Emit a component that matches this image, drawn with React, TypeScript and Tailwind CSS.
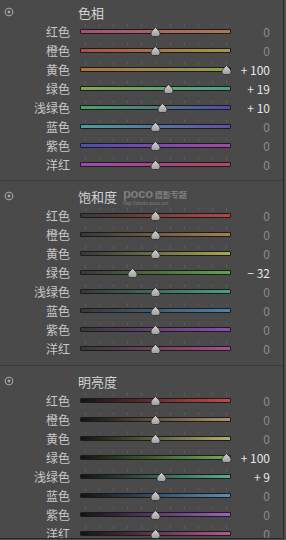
import React from 'react';

type Row = { label: string; value: number; track: string };
type Section = { title: string; rows: Row[] };

const sections: Section[] = [
  {
    title: '色相',
    rows: [
      { label: '红色', value: 0, track: 'bg-[linear-gradient(90deg,#ad4a78,#ad7a48)]' },
      { label: '橙色', value: 0, track: 'bg-[linear-gradient(90deg,#ad4e4a,#a09c48)]' },
      { label: '黄色', value: 100, track: 'bg-[linear-gradient(90deg,#b07238,#90a044)]' },
      { label: '绿色', value: 19, track: 'bg-[linear-gradient(90deg,#8aa648,#46a092)]' },
      { label: '浅绿色', value: 10, track: 'bg-[linear-gradient(90deg,#4ca45e,#4e4eaa)]' },
      { label: '蓝色', value: 0, track: 'bg-[linear-gradient(90deg,#48a09a,#644eaa)]' },
      { label: '紫色', value: 0, track: 'bg-[linear-gradient(90deg,#4e4eb0,#a648a6)]' },
      { label: '洋红', value: 0, track: 'bg-[linear-gradient(90deg,#9a48b2,#b2485e)]' },
    ],
  },
  {
    title: '饱和度',
    rows: [
      { label: '红色', value: 0, track: 'bg-[linear-gradient(90deg,#383838,#b84646)]' },
      { label: '橙色', value: 0, track: 'bg-[linear-gradient(90deg,#383838,#a88050)]' },
      { label: '黄色', value: 0, track: 'bg-[linear-gradient(90deg,#383838,#a8a84a)]' },
      { label: '绿色', value: -32, track: 'bg-[linear-gradient(90deg,#383838,#62a24a)]' },
      { label: '浅绿色', value: 0, track: 'bg-[linear-gradient(90deg,#383838,#44a286)]' },
      { label: '蓝色', value: 0, track: 'bg-[linear-gradient(90deg,#383838,#4a82b0)]' },
      { label: '紫色', value: 0, track: 'bg-[linear-gradient(90deg,#383838,#904ab0)]' },
      { label: '洋红', value: 0, track: 'bg-[linear-gradient(90deg,#383838,#b04a8c)]' },
    ],
  },
  {
    title: '明亮度',
    rows: [
      { label: '红色', value: 0, track: 'bg-[linear-gradient(90deg,#141414,#c04c4c)]' },
      { label: '橙色', value: 0, track: 'bg-[linear-gradient(90deg,#141414,#b09068)]' },
      { label: '黄色', value: 0, track: 'bg-[linear-gradient(90deg,#141414,#b0b068)]' },
      { label: '绿色', value: 100, track: 'bg-[linear-gradient(90deg,#141414,#72ac56)]' },
      { label: '浅绿色', value: 9, track: 'bg-[linear-gradient(90deg,#141414,#56ac94)]' },
      { label: '蓝色', value: 0, track: 'bg-[linear-gradient(90deg,#141414,#568eba)]' },
      { label: '紫色', value: 0, track: 'bg-[linear-gradient(90deg,#141414,#9e62ba)]' },
      { label: '洋红', value: 0, track: 'bg-[linear-gradient(90deg,#141414,#ba568e)]' },
    ],
  },
];

const ticks = [0, 1, 2, 3, 4, 5, 6, 7, 8, 9, 10];

const formatValue = (v: number) => (v > 0 ? `+ ${v}` : v < 0 ? `− ${-v}` : '0');

const Thumb: React.FC = () => (
  <svg width="11" height="10" viewBox="0 0 11 10" className="block">
    <defs>
      <linearGradient id="thumbFill" x1="0" y1="0" x2="0" y2="1">
        <stop offset="0" stopColor="#d4d4d4" />
        <stop offset="1" stopColor="#9c9c9c" />
      </linearGradient>
    </defs>
    <path
      d="M5.5 0.5 C7 2.5 10 4 10 6.5 C10 8.5 9 9.5 7.5 9.5 L3.5 9.5 C2 9.5 1 8.5 1 6.5 C1 4 4 2.5 5.5 0.5 Z"
      fill="url(#thumbFill)"
      stroke="#2a2a2a"
      strokeWidth="0.8"
    />
  </svg>
);

const Slider: React.FC<{ value: number; track: string }> = ({ value, track }) => {
  // thumb travels from x=5 to x=146 inside the 151px slider
  const x = 75.5 + (value / 100) * 70.5;
  return (
    <div className="relative w-[151px] h-[19px] flex items-center">
      {ticks.map((t) => (
        <span
          key={t}
          className="absolute top-[2px] w-px h-[3px] bg-[#5c5c5c]"
          style={{ left: 5 + t * 14.1 }}
        />
      ))}
      <div className={`w-full h-[5px] border border-[#1c1c1c] rounded-[1px] ${track}`} />
      <div className="absolute top-[5px]" style={{ left: x - 5.5 }}>
        <Thumb />
      </div>
    </div>
  );
};

const PanelIcon: React.FC = () => (
  <svg width="10" height="10" viewBox="0 0 10 10" className="block">
    <circle cx="5" cy="5" r="3.8" fill="none" stroke="#a8a8a8" strokeWidth="1.1" />
    <circle cx="5" cy="5" r="1.4" fill="#a8a8a8" />
  </svg>
);

const SectionBlock: React.FC<{ section: Section; first: boolean }> = ({ section, first }) => (
  <div className={first ? 'pt-[2px] pb-[6px]' : 'pt-[5px] pb-[7px] border-t border-[#3a3a3a]'}>
    <div className="h-[20px] flex items-center">
      <div className="w-[78px] pl-[4px]">
        <PanelIcon />
      </div>
      <span className="text-[13px] text-[#d2d2d2] leading-none">{section.title}</span>
    </div>
    {section.rows.map((r, i) => (
      <div key={i} className="h-[19px] flex items-center">
        <span className="w-[70px] text-right text-[12px] leading-none text-[#c8c8c8]">{r.label}</span>
        <div className="ml-[10px]">
          <Slider value={r.value} track={r.track} />
        </div>
        <span
          className={`w-[39px] text-right text-[12px] leading-none ${
            r.value === 0 ? 'text-[#8a8a8a]' : 'text-[#e6e6e6]'
          }`}
        >
          {formatValue(r.value)}
        </span>
      </div>
    ))}
  </div>
);

export default function App() {
  return (
    <div className="w-[286px] h-[540px] bg-[#505050] overflow-hidden font-['Noto_Sans_CJK_SC','Liberation_Sans',sans-serif]">
      <div className="relative w-[284px] h-[539px] bg-[#4a4a4a] border-r border-b border-[#262626] overflow-hidden">
        {sections.map((s, i) => (
          <SectionBlock key={s.title} section={s} first={i === 0} />
        ))}

        {/* watermark */}
        <div className="absolute left-[123px] top-[187px] flex flex-col leading-none text-[#8c8c8c] opacity-80">
          <div className="flex items-end gap-[2px]">
            <span className="text-[13px] font-bold tracking-tight font-['Liberation_Sans',sans-serif]">poco</span>
            <span className="text-[8px] font-bold mb-[1px]">摄影专题</span>
          </div>
          <span className="text-[5px] mt-[1px] font-['Liberation_Sans',sans-serif]">http://photo.poco.cn/</span>
        </div>
      </div>
    </div>
  );
}
